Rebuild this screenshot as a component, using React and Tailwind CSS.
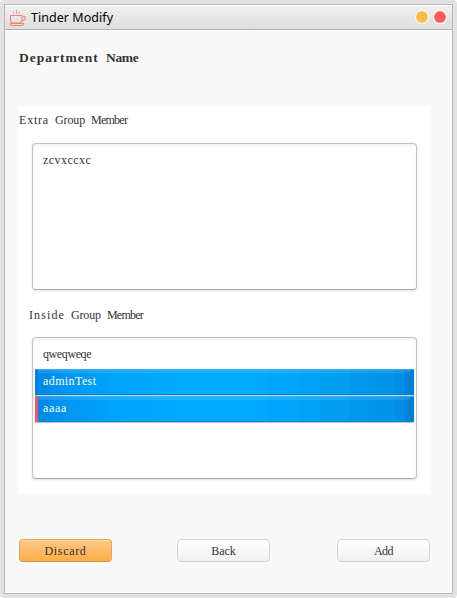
const ROW_FILL =
  'bg-[linear-gradient(90deg,#0083e2_0px,#0083e2_3px,#008ae6_3px,#008be9_12px,#0091ee_22px,#0098f3_36px,#009bf5_52px,#009ff8_66px,#00a3fb_80px,#00a6fe_110px,#00aaff_140px,#00aaff_232px,#00a6fc_232px,#00a6fc_263px,#00a2f8_263px,#00a2f8_285px,#009df3_285px,#009df3_314px,#0098ee_314px,#0098ee_334px,#0095ec_334px,#0095ec_360px,#008fe7_360px,#008fe7_369px,#0083dc_369px,#0083dc_375px,#007dd4_375px)]';

function Row({ children, marked }) {
  return (
    <li
      className={`relative flex h-[27px] items-start border-b pl-2 pt-1 text-white ${ROW_FILL} ${
        marked ? 'border-[#bfc3c7]' : 'border-[#bfd0dc]'
      }`}
    >
      <span className="absolute inset-x-0 top-0 h-px bg-[#5cc0f5]/60" />
      <span className="absolute left-[3px] right-1 top-px h-[3px] bg-white/10" />
      <span className="absolute inset-x-0 bottom-0 h-px bg-[#0086d6]" />
      {marked && <span className="absolute bottom-0 left-0 top-0 w-[3px] bg-[#fa5858]" />}
      <span className="relative">{children}</span>
    </li>
  );
}

function ListBox({ className, children }) {
  return (
    <ul
      className={`ml-[13px] w-[385px] rounded-[4px] border border-[#c3c3c3] border-b-[#acacac] bg-white px-0.5 pt-1 shadow-[0_1px_3px_rgba(0,0,0,0.13),inset_0_2px_3px_rgba(0,0,0,0.05)] ${className}`}
    >
      {children}
    </ul>
  );
}

function Button({ primary, children }) {
  return (
    <button
      className={`flex h-[23px] w-[93px] items-center justify-center rounded-[4px] border pt-px text-[#333] ${
        primary
          ? 'border-[#e3a65c] border-b-[#d39845] bg-linear-to-b from-[#fdc986] to-[#fdae43] shadow-[inset_0_1px_0_#ffdba8]'
          : 'border-[#d3d3d3] bg-linear-to-b from-white to-[#f1f1f1]'
      }`}
    >
      {children}
    </button>
  );
}

function CupIcon() {
  return (
    <svg width="18" height="18" viewBox="0 0 18 18" fill="none" stroke="#fa806c" strokeWidth="1.1">
      <path d="M1.5 6.5h11.5v4.3c0 1.8-1.2 3.2-3 3.2H4.5c-1.8 0-3-1.4-3-3.2z" />
      <path d="M13 7.3h1.4c1.3 0 2.1.6 2.1 1.6 0 1.4-1.3 2.3-3.7 2.4" />
      <path d="M1 14.5c.2 1.2.8 2 2 2h9.5c1.1 0 1.7-.8 2-2H1" />
      <path d="M4.5 2.5v2M7.5.8v4.2M10.5 2.5v2" strokeOpacity=".7" />
    </svg>
  );
}

export default function App() {
  return (
    <div className="h-[598px] w-[457px] bg-white font-['Liberation_Serif',serif] text-[12px] leading-4 text-[#333]">
      <div className="h-full rounded-[4px] bg-[#e2e2e2] p-1">
        <div className="flex h-full flex-col border border-[#b8b8b8] bg-[#f9f9f9]">
          <header className="flex h-[25px] shrink-0 items-center border-b border-t border-b-[#b4b4b4] border-t-white bg-linear-to-b from-[#f0f0f0] to-[#dedede] pl-1">
            <CupIcon />
            <h1 className="ml-1 font-['Noto_Sans',sans-serif] text-[12.5px] leading-4 tracking-[0.04px] text-black">
              Tinder Modify
            </h1>
            <div className="mb-0.5 ml-auto mr-[5px] flex gap-1">
              <span className="size-[14px] rounded-full border border-white/80 bg-[#ffbd44] bg-clip-padding" />
              <span className="size-[14px] rounded-full border border-white/80 bg-[#ff5a52] bg-clip-padding" />
            </div>
          </header>
          <main className="flex flex-1 flex-col pl-[14px]">
            <h2 className="mt-5 h-4 text-[13.5px] font-bold [word-spacing:4px]">
              <span className="tracking-[1px]">Department</span> <span className="tracking-[-0.4px]">Name</span>
            </h2>
            <section className="mt-10 h-[388px] w-[411px] bg-white">
              <h3 className="h-[22px] pt-1.5 [word-spacing:3px]">
                <span className="tracking-[0.8px]">Extra</span> <span className="tracking-[-0.13px]">Group</span>{' '}
                <span className="tracking-[-0.75px]">Member</span>
              </h3>
              <ListBox className="mt-[15px] h-[147px]">
                <li className="pl-2 pt-1 tracking-[0.45px]">zcvxccxc</li>
              </ListBox>
              <h3 className="ml-[10px] mt-[17px] h-4 [word-spacing:3px]">
                <span className="tracking-[1.1px]">Inside</span> <span className="tracking-[-0.13px]">Group</span>{' '}
                <span className="tracking-[-0.75px]">Member</span>
              </h3>
              <ListBox className="mt-[14px] h-[142px]">
                <li className="h-[27px] pl-2 pt-1 tracking-[-0.4px]">qweqweqe</li>
                <Row>
                  <span className="tracking-[0.4px]">adminTest</span>
                </Row>
                <Row marked>
                  <span className="tracking-[0.67px]">aaaa</span>
                </Row>
              </ListBox>
            </section>
            <div className="mt-[45px] flex w-[411px]">
              <Button primary>
                <span className="tracking-[0.67px]">Discard</span>
              </Button>
              <div className="ml-[65px]">
                <Button>
                  <span className="tracking-[-0.1px]">Back</span>
                </Button>
              </div>
              <div className="ml-auto">
                <Button>
                  <span className="tracking-[-0.5px]">Add</span>
                </Button>
              </div>
            </div>
          </main>
        </div>
      </div>
    </div>
  );
}
